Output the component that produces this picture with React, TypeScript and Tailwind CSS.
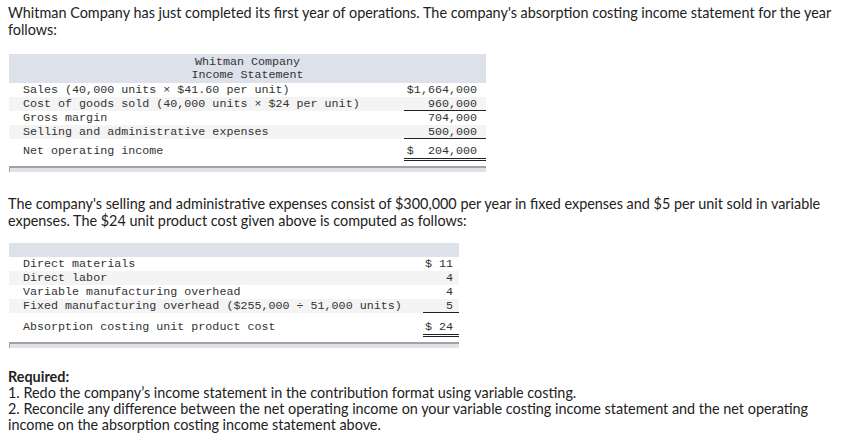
const mono = "font-['Liberation_Mono','DejaVu_Sans_Mono',monospace] text-[11.7px] leading-[14px] text-[#333]";

type Row = { label: string; value: string; shade?: boolean; line?: 'single' | 'double'; tall?: boolean };

const incomeRows: Row[] = [
  { label: 'Sales (40,000 units × $41.60 per unit)', value: '$1,664,000' },
  { label: 'Cost of goods sold (40,000 units × $24 per unit)', value: '960,000', shade: true, line: 'single' },
  { label: 'Gross margin', value: '704,000' },
  { label: 'Selling and administrative expenses', value: '500,000', shade: true, line: 'single' },
  { label: 'Net operating income', value: '$\u00a0\u00a0204,000', tall: true, line: 'double' },
];

const costRows: Row[] = [
  { label: 'Direct materials', value: '$ 11' },
  { label: 'Direct labor', value: '4', shade: true },
  { label: 'Variable manufacturing overhead', value: '4' },
  { label: 'Fixed manufacturing overhead ($255,000 ÷ 51,000 units)', value: '5', shade: true, line: 'single' },
  { label: 'Absorption costing unit product cost', value: '$ 24', tall: true, line: 'double' },
];

function StatementRows({ rows, valueCol, tallLabel, tallValue }: { rows: Row[]; valueCol: string; tallLabel: string; tallValue: string }) {
  return (
    <>
      {rows.map((r) => (
        <div key={r.label} className={`flex ${r.shade ? 'bg-[#f4f4f4]' : ''}`}>
          <div className={`flex-1 pl-[14px] whitespace-pre ${r.tall ? tallLabel : 'h-[14px]'}`}>{r.label}</div>
          <div
            className={`${valueCol} text-right whitespace-pre ${r.tall ? tallValue : 'h-[14px]'} ${
              r.line === 'single' ? 'border-b border-[#222]' : ''
            } ${r.line === 'double' ? 'border-b-[3px] border-double border-[#222]' : ''}`}
          >
            {r.value}
          </div>
        </div>
      ))}
    </>
  );
}

function FooterBar() {
  return <div className="mt-[5px] h-[6px] border-t-2 border-l border-[#a3a3a3] bg-[#dfe2e9]" />;
}

export default function App() {
  return (
    <div className="w-[841px] h-[443px] bg-white px-[8px] pt-[4px] font-['Lato','Open_Sans',sans-serif] text-[14.4px] leading-[17px] text-[#222] overflow-hidden">
      <p>
        Whitman Company has just completed its first year of operations. The company's absorption costing income statement for the year
        <br />
        follows:
      </p>

      <div className={`mt-[16px] ml-[1px] w-[477px] ${mono}`}>
        <div className="bg-[#dde1e9] h-[29px] pt-[2px] text-center leading-[13px]">
          <div>Whitman Company</div>
          <div>Income Statement</div>
        </div>
        <StatementRows
          rows={incomeRows}
          valueCol="w-[82px] pr-[9px]"
          tallLabel="pt-[5px] h-[21px]"
          tallValue="pt-[5px] h-[22px]"
        />
        <FooterBar />
      </div>

      <p className="mt-[23px]">
        The company's selling and administrative expenses consist of $300,000 per year in fixed expenses and $5 per unit sold in variable
        <br />
        expenses. The $24 unit product cost given above is computed as follows:
      </p>

      <div className={`mt-[14px] ml-[1px] w-[450px] ${mono}`}>
        <div className="bg-[#dde1e9] h-[14px]" />
        <StatementRows
          rows={costRows}
          valueCol="w-[36px] pr-[6px]"
          tallLabel="pt-[7px] h-[23px]"
          tallValue="pt-[7px] h-[24px]"
        />
        <FooterBar />
      </div>

      <div className="mt-[21px] leading-[16px]">
        <div className="font-bold">Required:</div>
        <div>1. Redo the company’s income statement in the contribution format using variable costing.</div>
        <div>
          2. Reconcile any difference between the net operating income on your variable costing income statement and the net operating
          <br />
          income on the absorption costing income statement above.
        </div>
      </div>
    </div>
  );
}
